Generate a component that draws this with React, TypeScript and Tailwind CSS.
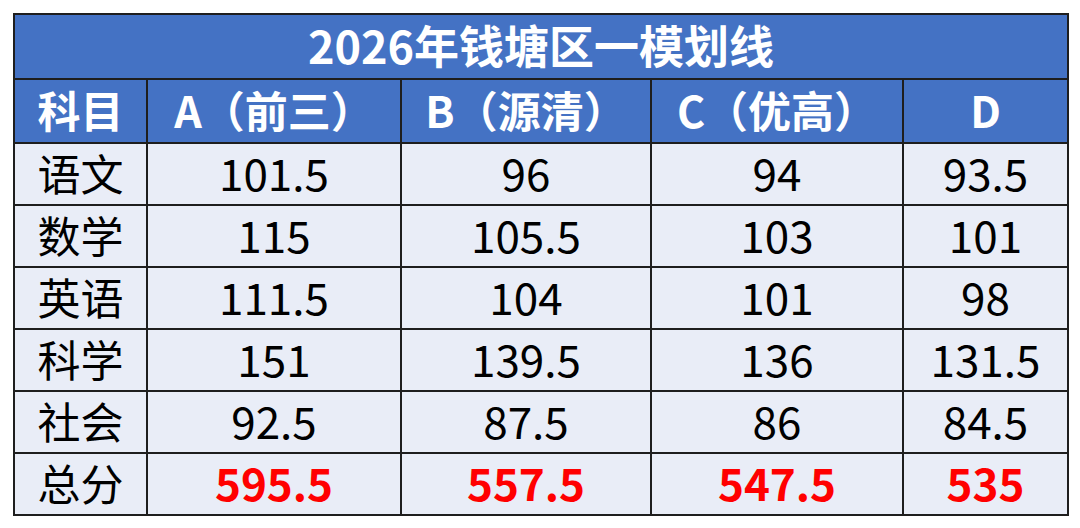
import React from "react";

const rows: { subject: string; vals: string[]; total?: boolean }[] = [
  { subject: "语文", vals: ["101.5", "96", "94", "93.5"] },
  { subject: "数学", vals: ["115", "105.5", "103", "101"] },
  { subject: "英语", vals: ["111.5", "104", "101", "98"] },
  { subject: "科学", vals: ["151", "139.5", "136", "131.5"] },
  { subject: "社会", vals: ["92.5", "87.5", "86", "84.5"] },
  { subject: "总分", vals: ["595.5", "557.5", "547.5", "535"], total: true },
];

const headers = ["A（前三）", "B（源清）", "C（优高）", "D"];

export default function App() {
  return (
    <div
      className="w-[1080px] h-[528px] bg-white pt-[13px] pl-[13px]"
      style={{ fontFamily: '"Noto Sans CJK SC", "Noto Sans", sans-serif' }}
    >
      <table className="border-collapse table-fixed w-[1054px] border-2 border-[#1e1e1e]">
        <colgroup>
          <col className="w-[133px]" />
          <col className="w-[254px]" />
          <col className="w-[250px]" />
          <col className="w-[252px]" />
          <col className="w-[165px]" />
        </colgroup>
        <tbody>
          <tr className="h-[65px]">
            <td
              colSpan={5}
              className="bg-[#4472C4] text-white font-bold text-[45px] leading-none text-center pb-[4px] border-2 border-[#1e1e1e]"
            >
              2026年钱塘区一模划线
            </td>
          </tr>
          <tr className="h-[64px]">
            <td className="bg-[#4472C4] text-white font-bold text-[43px] leading-none text-center pb-[4px] border-2 border-[#1e1e1e]">
              科目
            </td>
            {headers.map((h) => (
              <td
                key={h}
                className="bg-[#4472C4] text-white font-bold text-[43px] leading-none text-center pb-[4px] border-2 border-[#1e1e1e]"
              >
                {h}
              </td>
            ))}
          </tr>
          {rows.map((r) => (
            <tr key={r.subject} className="h-[62px]">
              <td className="bg-[#E9EDF7] text-black text-[43px] leading-none text-center pb-[4px] border-2 border-[#1e1e1e]">
                {r.subject}
              </td>
              {r.vals.map((v, i) => (
                <td
                  key={i}
                  className={
                    r.total
                      ? "bg-[#E9EDF7] text-[#FF0000] font-bold text-[44px] leading-none text-center pb-[4px] border-2 border-[#1e1e1e]"
                      : "bg-[#E9EDF7] text-black text-[44px] leading-none text-center pb-[4px] border-2 border-[#1e1e1e]"
                  }
                >
                  {v}
                </td>
              ))}
            </tr>
          ))}
        </tbody>
      </table>
    </div>
  );
}
